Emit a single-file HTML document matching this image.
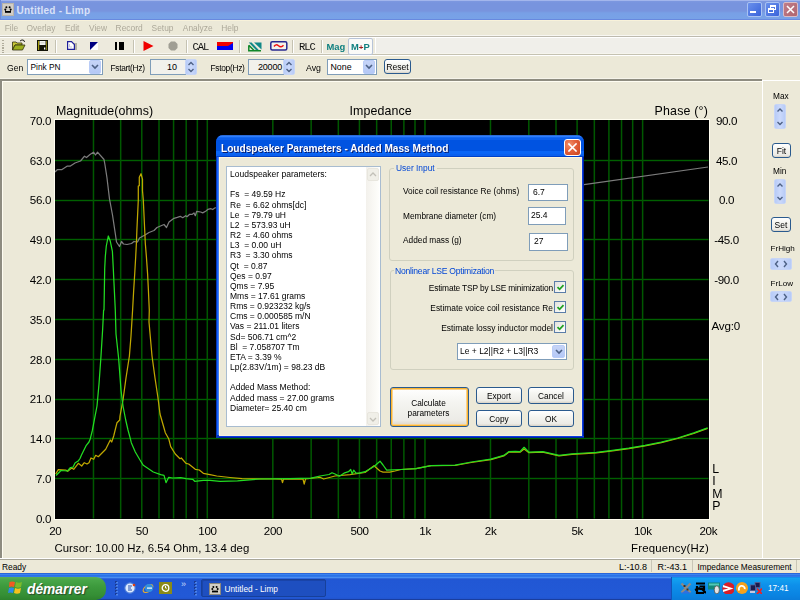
<!DOCTYPE html>
<html><head><meta charset="utf-8">
<style>
*{box-sizing:border-box}
html,body{margin:0;padding:0;width:800px;height:600px;overflow:hidden;background:#ECE9D8;font-family:"Liberation Sans",sans-serif;color:#000}
.a{position:absolute}
.t{position:absolute;white-space:nowrap;line-height:1}
.btn{border:1px solid #2A5A8E;border-radius:3px;background:linear-gradient(#FFFFFF 0,#F4F4F0 40%,#ECEBE6 85%,#D8D2C6 100%)}
.def{box-shadow:inset 0 0 0 1px #F8B330,inset 0 0 0 2px #FCD28A}
.cb{width:12px;height:12px;border:1px solid #5B7DA8;background:linear-gradient(135deg,#E2E2DC,#FFFFFF)}
.cbtn{border-radius:2px;background:linear-gradient(#C6D4F7,#B4C8F6);border:1px solid #B9CCF7}
.sep{position:absolute;top:40px;width:2px;height:13px;border-left:1px solid #C5C2B2;border-right:1px solid #FFFFFF}
.spin{position:absolute;border-radius:2px;background:linear-gradient(90deg,#B7CBF7,#CBD9FB 50%,#B7CBF7);border:1px solid #C7D5F6}
.ax{position:absolute;white-space:nowrap;line-height:1;font-size:11.6px;color:#000;letter-spacing:-0.35px}
.tray{position:absolute;top:581px;width:12px;height:12px}
</style></head><body>
<div class="a" style="left:0;top:0;width:800px;height:600px;overflow:hidden;filter:blur(0.35px)">

<!-- TITLE BAR -->
<div class="a" style="left:0;top:0;width:800px;height:20px;background:linear-gradient(#A3B6EC 0px,#A3B6EC 1px,#7D98E0 1px,#7894DE 3px,#7894DE 11px,#78A0E6 13px,#78A2E7 19px,#6889DF 19px,#6889DF 20px)"></div>
<div class="a" style="left:0;top:0;width:1px;height:20px;background:#6D8BD8"></div>
<svg class="a" style="left:2px;top:3px" width="12" height="13"><rect x="0.5" y="0.5" width="11" height="12" fill="#D2CEC6" stroke="#B8B4AA"/><circle cx="4.4" cy="4.3" r="1" fill="#000"/><circle cx="7.6" cy="4.3" r="1" fill="#000"/><circle cx="3.3" cy="6.4" r="1" fill="#000"/><circle cx="8.7" cy="6.4" r="1" fill="#000"/><rect x="3" y="8" width="6" height="1.8" fill="#000"/><rect x="3" y="7.3" width="1" height="1" fill="#000"/><rect x="8" y="7.3" width="1" height="1" fill="#000"/></svg>
<div class="t" style="left:16.5px;top:5.5px;font-size:10px;font-weight:bold;color:#D8E2F8;letter-spacing:0.25px">Untitled - Limp</div>
<!-- title buttons -->
<div class="a" style="left:747px;top:2px;width:15px;height:15px;border:1px solid #A9C2F2;border-radius:2px;background:linear-gradient(135deg,#6A90EC,#3A64DA)"></div>
<div class="a" style="left:750px;top:11px;width:6px;height:2px;background:#FFFFFF"></div>
<div class="a" style="left:765px;top:2px;width:15px;height:15px;border:1px solid #A9C2F2;border-radius:2px;background:linear-gradient(135deg,#6A90EC,#3A64DA)"></div>
<div class="a" style="left:770px;top:5px;width:6px;height:5px;border:1px solid #FFF;border-top-width:2px"></div>
<div class="a" style="left:768px;top:8px;width:6px;height:5px;border:1px solid #FFF;border-top-width:2px;background:#4A72DE"></div>
<div class="a" style="left:783px;top:2px;width:15px;height:15px;border:1px solid #D8BCC6;border-radius:2px;background:linear-gradient(135deg,#C07C88,#B06670)"></div>
<svg class="a" style="left:786px;top:5px" width="9" height="9"><path d="M1 1 L8 8 M8 1 L1 8" stroke="#FFFFFF" stroke-width="1.5"/></svg>

<!-- MENU -->
<div class="a" style="left:0;top:20px;width:800px;height:1px;background:#F8F2DA"></div>
<div class="t" style="left:0;top:23.6px;font-size:8.4px;color:#ACA899">
<span class="a" style="left:4.7px">File</span><span class="a" style="left:26.6px">Overlay</span><span class="a" style="left:65px">Edit</span><span class="a" style="left:89px">View</span><span class="a" style="left:115.6px">Record</span><span class="a" style="left:151.6px">Setup</span><span class="a" style="left:182.8px">Analyze</span><span class="a" style="left:221.3px">Help</span>
</div>

<!-- TOOLBAR 1 -->
<div class="a" style="left:0;top:35px;width:800px;height:1px;background:#F8F7F2"></div>
<div class="a" style="left:0;top:36px;width:800px;height:1px;background:#BDBAAE"></div>
<div class="a" style="left:0;top:37px;width:800px;height:1px;background:#FFFFFF"></div>
<div class="a" style="left:0;top:38px;width:800px;height:16px;background:#EDEADD"></div>
<div class="a" style="left:375px;top:38px;width:425px;height:16px;background:#F0EFEA;border-left:1px solid #FFFFFF"></div>
<div class="a" style="left:0;top:53px;width:800px;height:1px;background:#F6F5EE"></div>
<div class="a" style="left:0;top:54px;width:800px;height:1px;background:#C5C2B2"></div>
<div class="a" style="left:0;top:55px;width:800px;height:1px;background:#FFFFFF"></div>
<div class="a" style="left:2px;top:40px;width:2px;height:13px;background:repeating-linear-gradient(#B0AC9C 0,#B0AC9C 1px,transparent 1px,transparent 2.5px)"></div>
<!-- open folder -->
<svg class="a" style="left:12px;top:39px" width="14" height="12"><path d="M0.5 3 L4 3 L5 4 L10 4 L10 6 L3 6 L0.5 11 Z" fill="#C8C838" stroke="#303010" stroke-width="0.8"/><path d="M3 6 L13 6 L10.5 11 L0.5 11 Z" fill="#9DB020" stroke="#303010" stroke-width="0.8"/><path d="M8 2 Q10 0 12 1.5 L12.5 3" stroke="#202020" fill="none" stroke-width="1"/></svg>
<!-- save -->
<svg class="a" style="left:37px;top:40px" width="11" height="11"><rect width="11" height="11" fill="#141408"/><rect x="1" y="1" width="1.2" height="9" fill="#A8A010"/><rect x="9" y="1" width="1" height="9" fill="#807A10"/><rect x="2.5" y="1" width="6" height="4" fill="#F4F4F0"/><rect x="3.5" y="2" width="4" height="1.5" fill="#D8D8D0"/><rect x="7" y="7.5" width="1.3" height="2" fill="#FFFFFF"/></svg>
<div class="sep" style="left:55px"></div>
<!-- copy -->
<div class="a" style="left:70px;top:43px;width:7px;height:7px;background:#B4B0A4"></div>
<svg class="a" style="left:67px;top:41px" width="8" height="9"><path d="M0.6 0.6 L4.5 0.6 L7.4 3.5 L7.4 8.4 L0.6 8.4 Z" fill="#FFFFFF" stroke="#20209A" stroke-width="1.2"/><path d="M2.5 3 L2.5 6 L5 6" fill="none" stroke="#C8C8D8" stroke-width="1"/></svg>
<!-- blue triangle -->
<svg class="a" style="left:90px;top:42px" width="8" height="8"><rect width="8" height="8" fill="#FFFFFF"/><path d="M0 0 L8 0 L0 8 Z" fill="#000080"/></svg>
<!-- pause -->
<div class="a" style="left:115px;top:42px;width:2px;height:8px;background:#000"></div>
<div class="a" style="left:119px;top:42px;width:5px;height:8px;background:#000"></div>
<div class="sep" style="left:133px"></div>
<svg class="a" style="left:143px;top:41px" width="11" height="10"><path d="M0.5 0 L10.5 5 L0.5 10 Z" fill="#F00000"/></svg>
<svg class="a" style="left:168px;top:41px" width="10" height="10"><path d="M3 0.5 L7 0.5 L9.5 3 L9.5 7 L7 9.5 L3 9.5 L0.5 7 L0.5 3 Z" fill="#A09E94"/></svg>
<div class="sep" style="left:186px"></div>
<div class="t" style="left:192.5px;top:41.5px;font-size:10.5px;font-family:'Liberation Mono',monospace;letter-spacing:-1px;color:#101010">CAL</div>
<svg class="a" style="left:217px;top:42px" width="16" height="8"><rect width="16" height="8" fill="#0000F0"/><path d="M0 0 L16 0 L16 1 L11 4 L0 4 Z" fill="#F00000"/></svg>
<div class="sep" style="left:239px"></div>
<svg class="a" style="left:248px;top:41.5px" width="14" height="10"><path d="M6 0.5 L13.5 0.5 L13.5 7.5 Z" fill="#108888"/><path d="M0.8 0.5 L3.6 0.5 L11 8.2 L8.2 8.2 Z" fill="#108888"/><path d="M0.8 3.2 L0.8 8.8 L13 8.8 M0.8 3.2 L6.3 8.8" fill="none" stroke="#10882A" stroke-width="1.5"/></svg>
<svg class="a" style="left:270px;top:41px" width="18" height="10"><rect x="0.8" y="0.8" width="16" height="8.2" rx="1.5" fill="#F4F2EA" stroke="#282890" stroke-width="1.5"/><path d="M4 5.5 Q6 2.5 8.5 4.8 T13.5 4.2" stroke="#F01010" fill="none" stroke-width="1.4"/></svg>
<div class="sep" style="left:292px"></div>
<div class="t" style="left:299px;top:41.5px;font-size:10.5px;font-family:'Liberation Mono',monospace;letter-spacing:-1px;color:#101010">RLC</div>
<div class="sep" style="left:321px"></div>
<div class="t" style="left:326.5px;top:42px;font-size:9.4px;font-weight:bold;color:#108080">Mag</div>
<div class="a" style="left:348px;top:38px;width:25px;height:17px;border:1px solid #B8C4D8;border-radius:2px;background:#FAFAF8"></div>
<div class="t" style="left:351px;top:42px;font-size:9.4px;font-weight:bold;color:#108080">M<span style="color:#A02020;font-size:8px">+</span>P</div>

<!-- TOOLBAR 2 -->
<div class="t" style="left:7px;top:63.5px;font-size:8.6px">Gen</div>
<div class="a" style="left:27px;top:59px;width:76px;height:16px;background:#fff;border:1px solid #7F9DB9"></div>
<div class="t" style="left:30.5px;top:63px;font-size:8.3px">Pink PN</div>
<div class="a cbtn" style="left:89px;top:60px;width:12px;height:14px"></div>
<svg class="a" style="left:91px;top:64px" width="8" height="6"><path d="M1 1 L4 4 L7 1" stroke="#4D6185" stroke-width="1.6" fill="none"/></svg>
<div class="t" style="left:110.5px;top:64px;font-size:8.4px;letter-spacing:-0.3px">Fstart(Hz)</div>
<div class="a" style="left:150px;top:59px;width:36px;height:16px;background:#F2F1EC;border:1px solid #7F9DB9;border-right:none"></div>
<div class="t" style="left:150px;top:63px;width:27px;text-align:right;font-size:9px">10</div>
<div class="spin" style="left:185px;top:59px;width:12px;height:16px"></div>
<svg class="a" style="left:187px;top:61px" width="8" height="12"><path d="M1.5 4 L4 1.5 L6.5 4 M1.5 8 L4 10.5 L6.5 8" stroke="#4D6185" stroke-width="1.4" fill="none"/></svg>
<div class="t" style="left:210.5px;top:64px;font-size:8.4px;letter-spacing:-0.3px">Fstop(Hz)</div>
<div class="a" style="left:248px;top:59px;width:36px;height:16px;background:#F2F1EC;border:1px solid #7F9DB9;border-right:none"></div>
<div class="t" style="left:240px;top:63px;width:42px;text-align:right;font-size:9px;letter-spacing:-0.2px">20000</div>
<div class="spin" style="left:283px;top:59px;width:12px;height:16px"></div>
<svg class="a" style="left:285px;top:61px" width="8" height="12"><path d="M1.5 4 L4 1.5 L6.5 4 M1.5 8 L4 10.5 L6.5 8" stroke="#4D6185" stroke-width="1.4" fill="none"/></svg>
<div class="t" style="left:306px;top:63.5px;font-size:8.8px">Avg</div>
<div class="a" style="left:327px;top:59px;width:50px;height:16px;background:#fff;border:1px solid #7F9DB9"></div>
<div class="t" style="left:330.5px;top:63px;font-size:8.8px">None</div>
<div class="a cbtn" style="left:363px;top:60px;width:12px;height:14px"></div>
<svg class="a" style="left:365px;top:64px" width="8" height="6"><path d="M1 1 L4 4 L7 1" stroke="#4D6185" stroke-width="1.6" fill="none"/></svg>
<div class="a btn" style="left:384px;top:59px;width:27px;height:15px;border-width:1.5px"></div>
<div class="t" style="left:384px;top:62.5px;width:27px;text-align:center;font-size:8.6px">Reset</div>

<!-- MAIN FRAME -->
<div class="a" style="left:0;top:78px;width:762px;height:1px;background:#F6F4EA"></div>
<div class="a" style="left:0;top:79px;width:762px;height:2px;background:#8E8C80"></div>
<div class="a" style="left:0;top:79px;width:2px;height:480px;background:#8E8C80"></div>
<div class="a" style="left:2px;top:81px;width:760px;height:1px;background:#FFFDF2"></div>
<div class="a" style="left:2px;top:81px;width:1px;height:477px;background:#FFFDF2"></div>
<div class="a" style="left:762px;top:80px;width:1px;height:478px;background:#FFFFFF"></div>
<div class="a" style="left:762px;top:80px;width:38px;height:1px;background:#FFFFFF"></div>

<!-- CHART -->
<div class="a" style="left:54px;top:119px;width:656px;height:401px;background:#000;border:1px solid #FFFDF0"></div>
<svg class="a" style="left:0;top:0" width="800" height="600" >
<rect x="55" y="159.80" width="653.5" height="1.4" fill="#006000"/>
<rect x="55" y="199.80" width="653.5" height="1.4" fill="#006000"/>
<rect x="55" y="238.80" width="653.5" height="1.4" fill="#006000"/>
<rect x="55" y="278.80" width="653.5" height="1.4" fill="#006000"/>
<rect x="55" y="318.80" width="653.5" height="1.4" fill="#006000"/>
<rect x="55" y="358.80" width="653.5" height="1.4" fill="#006000"/>
<rect x="55" y="398.80" width="653.5" height="1.4" fill="#006000"/>
<rect x="55" y="437.80" width="653.5" height="1.4" fill="#006000"/>
<rect x="55" y="477.80" width="653.5" height="1.4" fill="#006000"/>
<rect x="92.73" y="120" width="1.5" height="398.5" fill="#005800"/>
<rect x="119.92" y="120" width="1.5" height="398.5" fill="#005800"/>
<rect x="141.02" y="120" width="1.5" height="398.5" fill="#005800"/>
<rect x="158.25" y="120" width="1.5" height="398.5" fill="#005800"/>
<rect x="172.83" y="120" width="1.5" height="398.5" fill="#005800"/>
<rect x="185.45" y="120" width="1.5" height="398.5" fill="#005800"/>
<rect x="196.58" y="120" width="1.5" height="398.5" fill="#005800"/>
<rect x="206.54" y="120" width="1.5" height="398.5" fill="#005800"/>
<rect x="272.07" y="120" width="1.5" height="398.5" fill="#005800"/>
<rect x="310.40" y="120" width="1.5" height="398.5" fill="#005800"/>
<rect x="337.59" y="120" width="1.5" height="398.5" fill="#005800"/>
<rect x="358.68" y="120" width="1.5" height="398.5" fill="#005800"/>
<rect x="375.92" y="120" width="1.5" height="398.5" fill="#005800"/>
<rect x="390.49" y="120" width="1.5" height="398.5" fill="#005800"/>
<rect x="403.12" y="120" width="1.5" height="398.5" fill="#005800"/>
<rect x="414.25" y="120" width="1.5" height="398.5" fill="#005800"/>
<rect x="424.21" y="120" width="1.5" height="398.5" fill="#005800"/>
<rect x="489.73" y="120" width="1.5" height="398.5" fill="#005800"/>
<rect x="528.06" y="120" width="1.5" height="398.5" fill="#005800"/>
<rect x="555.26" y="120" width="1.5" height="398.5" fill="#005800"/>
<rect x="576.35" y="120" width="1.5" height="398.5" fill="#005800"/>
<rect x="593.59" y="120" width="1.5" height="398.5" fill="#005800"/>
<rect x="608.16" y="120" width="1.5" height="398.5" fill="#005800"/>
<rect x="620.78" y="120" width="1.5" height="398.5" fill="#005800"/>
<rect x="631.92" y="120" width="1.5" height="398.5" fill="#005800"/>
<rect x="641.88" y="120" width="1.5" height="398.5" fill="#005800"/>
</svg>
<svg class="a" style="left:0;top:0" width="800" height="600"><defs><clipPath id="cc"><rect x="55" y="120" width="653.5" height="398.5"/></clipPath></defs><g clip-path="url(#cc)">
<polyline fill="none" stroke="#7C7C7C" stroke-width="1.25" stroke-linejoin="round" points="55.0,172.0 57.5,169.5 62.0,169.5 67.0,166.2 70.0,166.2 75.0,163.0 80.5,161.0 84.5,156.2 86.5,157.5 90.0,154.5 93.5,152.2 95.5,155.0 97.5,152.2 104.0,159.5 105.0,165.0 107.0,178.0 109.5,199.0 112.5,215.0 115.5,235.0 116.5,242.0 119.5,246.5 121.5,241.5 123.5,244.0 127.0,244.5 131.5,243.5 134.0,241.5 137.5,242.0 139.5,238.0 145.0,235.0 149.0,232.5 154.0,230.5 157.0,227.5 164.0,224.5 166.5,227.5 169.0,222.0 174.0,218.3 177.3,217.3 180.3,216.3 182.7,217.7 185.7,215.7 187.0,216.7 189.7,214.3 192.3,214.3 194.0,213.0 195.3,215.7 196.7,211.3 200.7,212.0 202.7,212.9 206.0,211.0 208.0,209.3 210.7,208.7 212.7,209.5 214.7,208.0 220.0,207.0 400.0,195.0 584.0,184.6 708.0,167.0"/>
<polyline fill="none" stroke="#C0A800" stroke-width="1.25" stroke-linejoin="round" points="55.7,474.0 58.3,469.6 65.7,470.0 67.7,471.3 71.7,468.0 73.7,469.3 78.3,463.3 81.7,466.0 84.3,462.7 87.0,464.0 89.0,462.7 91.0,458.0 93.7,459.3 95.7,455.3 98.3,456.7 105.7,449.3 110.3,440.0 111.7,442.0 113.7,436.0 117.0,422.7 119.7,420.0 120.0,416.0 123.0,400.0 126.0,378.0 129.4,356.0 131.0,336.0 132.6,310.0 133.7,290.0 134.7,274.0 135.7,256.7 136.4,243.3 136.9,230.0 138.3,200.0 138.3,186.0 139.3,185.7 139.3,177.3 141.0,173.7 142.5,179.3 142.5,190.7 143.3,200.0 144.7,230.0 145.3,243.3 146.4,256.7 147.6,274.0 148.4,290.0 149.3,310.0 149.0,322.0 152.0,356.0 155.0,378.0 158.0,398.0 160.0,414.0 164.0,428.0 165.3,432.7 168.7,438.7 170.7,446.7 175.3,454.0 180.0,458.7 181.3,458.0 186.0,463.3 188.7,464.0 195.3,469.3 199.3,470.0 203.3,473.3 210.0,474.7 216.7,476.0 230.0,477.5 242.0,478.7 275.0,479.0 281.5,479.0 282.5,482.7 283.5,479.0 303.0,479.0 304.2,484.2 305.5,479.0 318.0,477.5 320.0,477.2 323.7,479.0 335.0,476.0 350.0,474.7 365.0,472.5 374.0,465.7 380.0,471.0 383.0,472.2 389.7,472.2 395.0,471.0 401.0,469.5 416.0,468.7 431.0,465.7 455.0,465.5 471.3,462.5 490.8,459.7 503.8,455.9 508.7,452.2 515.2,451.9 520.0,452.2 524.1,449.0 529.0,452.7 542.8,452.2 552.6,454.3 559.0,455.9 572.0,454.3 585.0,453.6 596.3,452.8 612.5,450.8 628.8,448.7 645.0,445.9 661.3,442.7 677.6,438.5 693.8,433.3 707.6,428.4"/>
<polyline fill="none" stroke="#22DD22" stroke-width="1.25" stroke-linejoin="round" points="56.0,475.5 61.0,470.5 67.5,471.0 70.5,467.5 73.0,467.2 75.0,463.0 78.5,460.7 80.0,458.5 81.5,455.0 86.3,445.3 89.0,442.0 90.3,438.7 92.3,430.7 97.0,406.0 99.0,384.0 101.0,356.0 102.6,330.0 103.6,310.0 104.0,310.0 104.4,287.3 104.7,268.7 105.3,256.7 106.3,246.0 108.3,236.0 110.3,241.3 112.4,251.3 113.3,268.7 114.0,283.3 115.3,310.0 116.0,334.0 118.6,358.0 121.0,390.0 123.0,406.0 125.7,420.0 128.0,430.0 130.0,437.3 131.3,442.7 135.3,452.0 140.0,460.0 143.3,465.3 153.3,472.0 160.7,474.7 164.0,475.3 166.0,482.7 168.7,477.3 172.7,478.0 180.7,477.6 186.0,478.7 192.7,479.3 194.7,481.3 203.3,480.3 210.0,480.3 220.0,481.3 237.5,480.8 260.0,479.0 290.0,478.7 311.0,478.2 320.0,476.0 329.0,474.5 332.0,472.7 335.0,474.0 339.5,476.2 344.0,473.2 348.5,471.7 350.7,469.5 352.2,474.0 353.7,470.2 356.0,473.2 359.0,473.2 365.0,471.7 374.0,466.5 380.0,461.2 383.0,465.0 386.7,470.2 401.0,469.5 416.0,468.7 431.0,465.7 455.0,465.2 471.3,462.0 490.8,459.2 503.8,455.4 508.7,451.7 515.2,451.4 520.0,451.7 524.1,447.3 529.0,452.2 542.8,451.7 552.6,453.8 559.0,455.4 572.0,453.8 585.0,453.0 596.3,452.3 612.5,450.3 628.8,448.2 645.0,445.4 661.3,442.2 677.6,438.0 693.8,432.8 707.6,427.9"/>
</g></svg>
<div class="ax" style="top:114.78px;font-size:11.6px;left:-9.00px;width:60px;text-align:right;">70.0</div>
<div class="ax" style="top:154.58px;font-size:11.6px;left:-9.00px;width:60px;text-align:right;">63.0</div>
<div class="ax" style="top:194.38px;font-size:11.6px;left:-9.00px;width:60px;text-align:right;">56.0</div>
<div class="ax" style="top:234.18px;font-size:11.6px;left:-9.00px;width:60px;text-align:right;">49.0</div>
<div class="ax" style="top:273.98px;font-size:11.6px;left:-9.00px;width:60px;text-align:right;">42.0</div>
<div class="ax" style="top:313.78px;font-size:11.6px;left:-9.00px;width:60px;text-align:right;">35.0</div>
<div class="ax" style="top:353.58px;font-size:11.6px;left:-9.00px;width:60px;text-align:right;">28.0</div>
<div class="ax" style="top:393.38px;font-size:11.6px;left:-9.00px;width:60px;text-align:right;">21.0</div>
<div class="ax" style="top:433.18px;font-size:11.6px;left:-9.00px;width:60px;text-align:right;">14.0</div>
<div class="ax" style="top:472.98px;font-size:11.6px;left:-9.00px;width:60px;text-align:right;">7.0</div>
<div class="ax" style="top:512.78px;font-size:11.6px;left:-9.00px;width:60px;text-align:right;">0.0</div>
<div class="ax" style="top:114.78px;font-size:11.6px;left:686.50px;width:80px;text-align:center;">90.0</div>
<div class="ax" style="top:154.58px;font-size:11.6px;left:686.50px;width:80px;text-align:center;">45.0</div>
<div class="ax" style="top:194.38px;font-size:11.6px;left:686.50px;width:80px;text-align:center;">0.0</div>
<div class="ax" style="top:234.18px;font-size:11.6px;left:686.50px;width:80px;text-align:center;">-45.0</div>
<div class="ax" style="top:273.98px;font-size:11.6px;left:686.50px;width:80px;text-align:center;">-90.0</div>
<div class="ax" style="top:319.78px;font-size:11.6px;left:711.50px;letter-spacing:-0.2px">Avg:0</div>
<div class="ax" style="top:463.09px;font-size:12.3px;left:712.30px;letter-spacing:0">L</div>
<div class="ax" style="top:475.39px;font-size:12.3px;left:712.30px;letter-spacing:0">I</div>
<div class="ax" style="top:487.69px;font-size:12.3px;left:712.30px;letter-spacing:0">M</div>
<div class="ax" style="top:499.99px;font-size:12.3px;left:712.30px;letter-spacing:0">P</div>
<div class="ax" style="top:525.18px;font-size:11.6px;left:15.30px;width:80px;text-align:center;">20</div>
<div class="ax" style="top:525.18px;font-size:11.6px;left:101.92px;width:80px;text-align:center;">50</div>
<div class="ax" style="top:525.18px;font-size:11.6px;left:167.44px;width:80px;text-align:center;">100</div>
<div class="ax" style="top:525.18px;font-size:11.6px;left:232.97px;width:80px;text-align:center;">200</div>
<div class="ax" style="top:525.18px;font-size:11.6px;left:319.58px;width:80px;text-align:center;">500</div>
<div class="ax" style="top:525.18px;font-size:11.6px;left:385.11px;width:80px;text-align:center;">1k</div>
<div class="ax" style="top:525.18px;font-size:11.6px;left:450.63px;width:80px;text-align:center;">2k</div>
<div class="ax" style="top:525.18px;font-size:11.6px;left:537.25px;width:80px;text-align:center;">5k</div>
<div class="ax" style="top:525.18px;font-size:11.6px;left:602.78px;width:80px;text-align:center;">10k</div>
<div class="ax" style="top:525.18px;font-size:11.6px;left:668.30px;width:80px;text-align:center;">20k</div>
<div class="ax" style="top:104.80px;font-size:12.4px;left:56.00px;letter-spacing:0.05px">Magnitude(ohms)</div>
<div class="ax" style="top:104.80px;font-size:12.4px;left:349.50px;letter-spacing:0.1px">Impedance</div>
<div class="ax" style="top:104.80px;font-size:12.4px;left:654.50px;letter-spacing:0.2px">Phase (&deg;)</div>
<div class="ax" style="top:542.85px;font-size:11.4px;left:54.40px;letter-spacing:0.05px">Cursor: 10.00 Hz, 6.54 Ohm, 13.4 deg</div>
<div class="ax" style="top:542.85px;font-size:11.4px;left:631.00px;letter-spacing:0.2px">Frequency(Hz)</div>

<!-- RIGHT PANEL -->
<div class="t" style="left:773px;top:92px;font-size:8.3px">Max</div>
<div class="spin" style="left:774px;top:104px;width:12px;height:25px"></div>
<svg class="a" style="left:776px;top:106px" width="8" height="21"><path d="M1.5 5.5 L4 3 L6.5 5.5 M1.5 16 L4 18.5 L6.5 16" stroke="#4D6185" stroke-width="1.4" fill="none"/></svg>
<div class="a btn" style="left:772px;top:143px;width:19px;height:15px"></div>
<div class="t" style="left:772px;top:146.5px;width:19px;text-align:center;font-size:8.5px">Fit</div>
<div class="t" style="left:773px;top:167px;font-size:8.3px">Min</div>
<div class="spin" style="left:774px;top:179px;width:12px;height:25px"></div>
<svg class="a" style="left:776px;top:181px" width="8" height="21"><path d="M1.5 5.5 L4 3 L6.5 5.5 M1.5 16 L4 18.5 L6.5 16" stroke="#4D6185" stroke-width="1.4" fill="none"/></svg>
<div class="a btn" style="left:771px;top:217px;width:20px;height:15px"></div>
<div class="t" style="left:771px;top:220.5px;width:20px;text-align:center;font-size:8.5px">Set</div>
<div class="t" style="left:770.5px;top:244.5px;font-size:8.1px">FrHigh</div>
<div class="spin" style="left:770px;top:258px;width:22px;height:12px"></div>
<svg class="a" style="left:772px;top:259px" width="18" height="10"><path d="M6 2 L3.5 5 L6 8 M12 2 L14.5 5 L12 8" stroke="#4D6185" stroke-width="1.4" fill="none"/></svg>
<div class="t" style="left:770.5px;top:279.5px;font-size:8.1px">FrLow</div>
<div class="spin" style="left:770px;top:291px;width:22px;height:11px"></div>
<svg class="a" style="left:772px;top:291.5px" width="18" height="10"><path d="M6 2 L3.5 5 L6 8 M12 2 L14.5 5 L12 8" stroke="#4D6185" stroke-width="1.4" fill="none"/></svg>

<!-- DIALOG -->
<div id="dlg" class="a" style="left:216px;top:135px;width:368px;height:303px;border-radius:7px 7px 0 0;overflow:hidden;background:#0A4FDA">
  <div class="a" style="left:0;top:0;width:368px;height:22px;background:linear-gradient(#1A48B0 0px,#3D8DFF 1px,#1E70F8 2px,#0B5FEC 3px,#0B5FEC 5px,#0053E1 5px,#0053E1 16px,#0A66F6 16px,#0A66F6 19px,#0A60EE 19px,#0A60EE 21px,#0042C8 21px)"></div>
  <div class="a" style="left:0;top:22px;width:3px;height:281px;background:linear-gradient(90deg,#0838B8 0,#0838B8 1px,#1262FF 1px,#1262FF 2px,#4A7EEA 2px)"></div>
  <div class="a" style="left:366px;top:22px;width:2px;height:281px;background:linear-gradient(90deg,#0A3CE0 0,#0A3CE0 1px,#0020A0 1px)"></div>
  <div class="a" style="left:0;top:301px;width:368px;height:2px;background:linear-gradient(#0A3CE0 0,#0A3CE0 1px,#0020A0 1px)"></div><div class="a" style="left:0;top:300px;width:3px;height:3px;background:#0838B8"></div>
  <div class="t" style="left:6px;top:10px;font-size:10.1px;font-weight:bold;color:#0A1E6E;letter-spacing:0px">Loudspeaker Parameters - Added Mass Method</div>
  <div class="t" style="left:5px;top:9px;font-size:10.1px;font-weight:bold;color:#FFFFFF;letter-spacing:0px">Loudspeaker Parameters - Added Mass Method</div>
  <!-- close -->
  <div class="a" style="left:348px;top:4px;width:17px;height:17px;border:1px solid #FFFFFF;border-radius:3px;background:radial-gradient(circle at 30% 30%,#F0906A 0,#E2603A 45%,#C9421C 100%)">
    <svg class="a" style="left:3px;top:3px" width="9" height="9"><path d="M1 1 L8 8 M8 1 L1 8" stroke="#FFFFFF" stroke-width="1.6" stroke-linecap="square"/></svg>
  </div>
  <!-- client -->
  <div class="a" style="left:3px;top:22px;width:363px;height:279px;background:#ECE9D8;border-top:1px solid #FFF6DC;border-left:1px solid #FFF6DC;border-right:1px solid #F6F0DC;border-bottom:1px solid #F6F0DC"></div>
  <!-- listbox -->
  <div class="a" style="left:10px;top:31px;width:155px;height:261px;background:#FFFFFF;border:1px solid #A8BCD0"></div>
  <div class="a" style="left:150px;top:32px;width:13px;height:259px;background:linear-gradient(90deg,#F3F1EC,#FEFEFB)"></div>
  <div class="a" style="left:151px;top:33px;width:12px;height:13px;border:1px solid #E8E6DE;border-radius:2px;background:#F0EFE8"></div>
  <svg class="a" style="left:153px;top:37px" width="8" height="5"><path d="M1 4 L4 1 L7 4" stroke="#C2C0B8" stroke-width="1.3" fill="none"/></svg>
  <div class="a" style="left:151px;top:277px;width:12px;height:13px;border:1px solid #E8E6DE;border-radius:2px;background:#F0EFE8"></div>
  <svg class="a" style="left:153px;top:282px" width="8" height="5"><path d="M1 1 L4 4 L7 1" stroke="#C2C0B8" stroke-width="1.3" fill="none"/></svg>
  <div class="a" style="left:14px;top:34.1px;font-size:8.5px;line-height:10.15px;white-space:pre;color:#000">Loudspeaker parameters:

Fs  = 49.59 Hz
Re  = 6.62 ohms[dc]
Le  = 79.79 uH
L2  = 573.93 uH
R2  = 4.60 ohms
L3  = 0.00 uH
R3  = 3.30 ohms
Qt  = 0.87
Qes = 0.97
Qms = 7.95
Mms = 17.61 grams
Rms = 0.923232 kg/s
Cms = 0.000585 m/N
Vas = 211.01 liters
Sd= 506.71 cm^2
Bl  = 7.058707 Tm
ETA = 3.39 %
Lp(2.83V/1m) = 98.23 dB

Added Mass Method:
Added mass = 27.00 grams
Diameter= 25.40 cm</div>
  <!-- group 1 -->
  <div class="a" style="left:173px;top:33px;width:185px;height:93px;border:1px solid #D0D0BF;border-radius:3px"></div>
  <div class="t" style="left:178px;top:29px;padding:0 2px;background:#ECE9D8;font-size:8.4px;color:#0046D5">User Input</div>
  <div class="t" style="left:187px;top:52px;font-size:8.3px">Voice coil resistance Re (ohms)</div>
  <div class="t" style="left:187px;top:77px;font-size:8.3px">Membrane diameter (cm)</div>
  <div class="t" style="left:187px;top:101px;font-size:8.3px">Added mass (g)</div>
  <div class="a" style="left:312px;top:49px;width:40px;height:17px;background:#fff;border:1px solid #7F9DB9"></div>
  <div class="t" style="left:317px;top:53px;font-size:8.5px">6.7</div>
  <div class="a" style="left:312px;top:72px;width:38px;height:18px;background:#fff;border:1px solid #7F9DB9"></div>
  <div class="t" style="left:315px;top:76px;font-size:8.5px">25.4</div>
  <div class="a" style="left:313px;top:98px;width:39px;height:18px;background:#fff;border:1px solid #7F9DB9"></div>
  <div class="t" style="left:318px;top:102px;font-size:8.5px">27</div>
  <!-- group 2 -->
  <div class="a" style="left:174px;top:135px;width:184px;height:100px;border:1px solid #D0D0BF;border-radius:3px"></div>
  <div class="t" style="left:178px;top:131.7px;padding:0 1px;background:#ECE9D8;font-size:8.6px;letter-spacing:-0.25px;color:#0046D5">Nonlinear LSE Optimization</div>
  <div class="t" style="right:31px;top:149px;font-size:8.4px;letter-spacing:-0.15px">Estimate TSP by LSE minimization</div>
  <div class="t" style="right:31px;top:169px;font-size:8.37px">Estimate voice coil resistance Re</div>
  <div class="t" style="right:31px;top:189px;font-size:8.43px">Estimate lossy inductor model</div>
  <div class="a cb" style="left:338px;top:146px"><svg class="a" style="left:1px;top:1px" width="9" height="9"><path d="M1.5 4.2 L3.6 6.3 L7.5 2.2" stroke="#21A121" stroke-width="1.8" fill="none"/></svg></div>
  <div class="a cb" style="left:338px;top:166px"><svg class="a" style="left:1px;top:1px" width="9" height="9"><path d="M1.5 4.2 L3.6 6.3 L7.5 2.2" stroke="#21A121" stroke-width="1.8" fill="none"/></svg></div>
  <div class="a cb" style="left:338px;top:186px"><svg class="a" style="left:1px;top:1px" width="9" height="9"><path d="M1.5 4.2 L3.6 6.3 L7.5 2.2" stroke="#21A121" stroke-width="1.8" fill="none"/></svg></div>
  <div class="a" style="left:241px;top:208px;width:110px;height:17px;background:#fff;border:1px solid #7F9DB9"></div>
  <div class="t" style="left:244px;top:212px;font-size:8.5px">Le + L2||R2 + L3||R3</div>
  <div class="a cbtn" style="left:336px;top:210px;width:13px;height:13px"></div>
  <svg class="a" style="left:339px;top:214px" width="8" height="6"><path d="M1 1 L4 4 L7 1" stroke="#4D6185" stroke-width="1.6" fill="none"/></svg>
  <!-- buttons -->
  <div class="a btn def" style="left:174px;top:252px;width:79px;height:40px"></div>
  <div class="t" style="left:173px;top:263px;width:79px;text-align:center;font-size:8.3px;line-height:10px">Calculate<br>parameters</div>
  <div class="a btn" style="left:260px;top:252px;width:46px;height:17px"></div>
  <div class="t" style="left:260px;top:257px;width:46px;text-align:center;font-size:8.3px">Export</div>
  <div class="a btn" style="left:312px;top:252px;width:46px;height:17px"></div>
  <div class="t" style="left:312px;top:257px;width:46px;text-align:center;font-size:8.3px">Cancel</div>
  <div class="a btn" style="left:260px;top:275px;width:46px;height:17px"></div>
  <div class="t" style="left:260px;top:280px;width:46px;text-align:center;font-size:8.3px">Copy</div>
  <div class="a btn" style="left:312px;top:275px;width:46px;height:17px"></div>
  <div class="t" style="left:312px;top:280px;width:46px;text-align:center;font-size:8.3px">OK</div>
</div>


<!-- STATUS BAR -->
<div class="a" style="left:0;top:558px;width:800px;height:1px;background:#FFFFFF"></div>
<div class="a" style="left:0;top:559px;width:800px;height:1px;background:#A8A698"></div>
<div class="a" style="left:0;top:560px;width:800px;height:12px;background:#ECE9D8"></div>
<div class="a" style="left:0;top:572px;width:800px;height:1px;background:#F2E6C8"></div>
<div class="t" style="left:2px;top:562.5px;font-size:8.4px">Ready</div>
<div class="a" style="left:651px;top:560px;width:1px;height:12px;background:#C9C6B6"></div>
<div class="a" style="left:692px;top:560px;width:1px;height:12px;background:#C9C6B6"></div>
<div class="a" style="left:796px;top:560px;width:1px;height:12px;background:#C9C6B6"></div>
<div class="t" style="left:619px;top:562.5px;font-size:9px">L:-10.8</div>
<div class="t" style="left:657.5px;top:562.5px;font-size:9px">R:-43.1</div>
<div class="t" style="left:697.5px;top:562.5px;font-size:8.3px">Impedance Measurement</div>

<!-- TASKBAR -->
<div class="a" style="left:0;top:573px;width:800px;height:27px;background:linear-gradient(#2A66DA 0px,#2A66DA 1px,#3A84F0 1px,#3A84F0 2px,#2C72E6 2px,#2C72E6 3px,#3078EA 3px,#3078EA 4px,#4A8EF0 4px,#4A8EF0 5px,#2E68DE 5px,#2E68DE 6px,#2157D4 6px,#2259D6 24px,#2054CE 26px,#1A3E9E 26px)"></div>
<div class="a" style="left:0;top:577px;width:106px;height:23px;border-radius:0 10px 10px 0;background:linear-gradient(#5AAE5A 0px,#48A648 3px,#3C993C 10px,#358F35 18px,#2D822D 23px)"></div>
<svg class="a" style="left:8px;top:581px" width="15" height="13"><path d="M1.5 1 Q4 0 7 1 L6 6 Q3.5 5 1 6 Z" fill="#F25A22"/><path d="M8 1 Q11 2.5 14 1 L13 6 Q10 7.5 7 6 Z" fill="#7DBB2A"/><path d="M1 7 Q3.5 6 6 7 L5 12 Q2.5 11 0 12 Z" fill="#2B8BE8"/><path d="M7 7 Q10 8.5 13 7 L12 12 Q9 13.5 6 12 Z" fill="#F4C21C"/></svg>
<div class="t" style="left:27px;top:582.5px;font-size:13.8px;font-weight:bold;font-style:italic;color:#FFFFFF;text-shadow:1px 1px 1px #2A4A2A">démarrer</div>
<svg class="a" style="left:115px;top:581px" width="3" height="15"><rect x="0" y="0" width="2" height="2" fill="#1A3C98"/><rect x="1" y="1" width="2" height="1.5" fill="#5A92F0" opacity="0.8"/><rect x="0" y="3" width="2" height="2" fill="#1A3C98"/><rect x="1" y="4" width="2" height="1.5" fill="#5A92F0" opacity="0.8"/><rect x="0" y="6" width="2" height="2" fill="#1A3C98"/><rect x="1" y="7" width="2" height="1.5" fill="#5A92F0" opacity="0.8"/><rect x="0" y="9" width="2" height="2" fill="#1A3C98"/><rect x="1" y="10" width="2" height="1.5" fill="#5A92F0" opacity="0.8"/><rect x="0" y="12" width="2" height="2" fill="#1A3C98"/><rect x="1" y="13" width="2" height="1.5" fill="#5A92F0" opacity="0.8"/></svg>
<svg class="a" style="left:124px;top:582px" width="12" height="12"><circle cx="6" cy="6" r="5.2" fill="#DDEBFF" stroke="#4C7CD8" stroke-width="1.2"/><path d="M4 4 L8 4 M4 6 L7 6 M4 8 L8 8" stroke="#2850A8" stroke-width="1"/><circle cx="10" cy="3" r="1.3" fill="#E04010"/></svg>
<svg class="a" style="left:142px;top:582px" width="12" height="12"><ellipse cx="6" cy="6.5" rx="5.5" ry="3" transform="rotate(-35 6 6.5)" fill="none" stroke="#E8B030" stroke-width="1.2"/><circle cx="7" cy="6" r="4" fill="#2F8FE0"/><rect x="5" y="5.5" width="5" height="1.2" fill="#FFF"/></svg>
<div class="a" style="left:159px;top:582px;width:13px;height:12px;background:#8A8A18"></div>
<svg class="a" style="left:161px;top:583px" width="9" height="10"><circle cx="4.5" cy="5" r="3.3" stroke="#FFF" stroke-width="1.3" fill="none"/><path d="M4.5 3 L4.5 5 L6 5" stroke="#FFF" stroke-width="1"/></svg>
<div class="t" style="left:181px;top:580px;font-size:9px;color:#C8DAFA">»</div>
<svg class="a" style="left:194px;top:581px" width="3" height="15"><rect x="0" y="0" width="2" height="2" fill="#1A3C98"/><rect x="1" y="1" width="2" height="1.5" fill="#5A92F0" opacity="0.8"/><rect x="0" y="3" width="2" height="2" fill="#1A3C98"/><rect x="1" y="4" width="2" height="1.5" fill="#5A92F0" opacity="0.8"/><rect x="0" y="6" width="2" height="2" fill="#1A3C98"/><rect x="1" y="7" width="2" height="1.5" fill="#5A92F0" opacity="0.8"/><rect x="0" y="9" width="2" height="2" fill="#1A3C98"/><rect x="1" y="10" width="2" height="1.5" fill="#5A92F0" opacity="0.8"/><rect x="0" y="12" width="2" height="2" fill="#1A3C98"/><rect x="1" y="13" width="2" height="1.5" fill="#5A92F0" opacity="0.8"/></svg>
<div class="a" style="left:201px;top:579px;width:125px;height:18px;border-radius:2px;background:#1E4FC0;border:1px solid #17409A;box-shadow:inset 1px 1px 0 #1A44A8"></div>
<svg class="a" style="left:209px;top:583px" width="12" height="12"><rect x="0.5" y="0.5" width="11" height="11" fill="#D2CEC6" stroke="#8C887E"/><circle cx="4.4" cy="4" r="1" fill="#000"/><circle cx="7.6" cy="4" r="1" fill="#000"/><circle cx="3.3" cy="6" r="1" fill="#000"/><circle cx="8.7" cy="6" r="1" fill="#000"/><rect x="3" y="7.6" width="6" height="1.8" fill="#000"/></svg>
<div class="t" style="left:224.5px;top:585px;font-size:8.3px;color:#FFFFFF">Untitled - Limp</div>
<!-- tray -->
<div class="a" style="left:671px;top:577px;width:129px;height:23px;background:linear-gradient(#0C7FE0 0,#16A2F2 1px,#12A0F0 2px,#0E90EA 8px,#0A84E2 18px,#0A7CDA 23px);border-left:1px solid #1254B8"></div>
<svg class="tray" style="left:680px;top:582px" width="12" height="12"><path d="M1.5 1.5 L10.5 10.5 M10.5 1.5 L1.5 10.5" stroke="#8C8A88" stroke-width="2.4"/><rect x="3.5" y="3" width="2" height="2" fill="#3A3028"/><rect x="6.5" y="6.5" width="2" height="2" fill="#3A3028"/><path d="M0.5 11.5 L6 8.5 L11.5 11.5 Z" fill="#2F6FE0"/></svg>
<svg class="tray" style="left:694px;top:582px" width="13" height="12"><path d="M2 1.5 L11 1.5 M3 4 L3 11 L10 11 M5.5 4.5 L10 4.5 L10 7 L5.5 7 M1 8 L6 6 M8 7 L12 11" stroke="#000" stroke-width="2.2" fill="none"/></svg>
<svg class="tray" style="left:708px;top:582px" width="13" height="12"><rect x="0" y="0.5" width="12" height="7" fill="#138878"/><rect x="1" y="1.5" width="10" height="2" fill="#50C8B8"/><ellipse cx="8.8" cy="7.8" rx="2.6" ry="4" fill="#E4E4E4" stroke="#505050" stroke-width="0.8"/></svg>
<svg class="tray" style="left:722px;top:581.5px" width="13" height="13"><circle cx="6.5" cy="6.5" r="6.2" fill="#D81E28"/><path d="M1 3 L11.5 6.5 L1 10 L1 7.8 L6.5 6.5 L1 5.2 Z" fill="#FFFFFF"/></svg>
<svg class="tray" style="left:736px;top:582px" width="12" height="12"><circle cx="6" cy="6" r="6" fill="#F5A21C"/><path d="M3.3 8.5 A3 3 0 1 1 8.8 7.2" stroke="#FFF" stroke-width="1.8" fill="none"/></svg>
<svg class="tray" style="left:750px;top:582px" width="13" height="13"><rect x="5" y="0.5" width="5" height="5" fill="#1A1A50" stroke="#606090" stroke-width="0.8"/><rect x="0.5" y="3" width="5" height="5.5" fill="#1A1A50" stroke="#606090" stroke-width="0.8"/><rect x="0" y="9" width="5" height="2" fill="#C8C8E0"/><path d="M7 6.5 L12 12 M12 6.5 L7 12" stroke="#F02020" stroke-width="1.8"/></svg>
<div class="t" style="left:768px;top:585px;font-size:8.2px;color:#FFFFFF">17:41</div>

</div>
</body></html>
